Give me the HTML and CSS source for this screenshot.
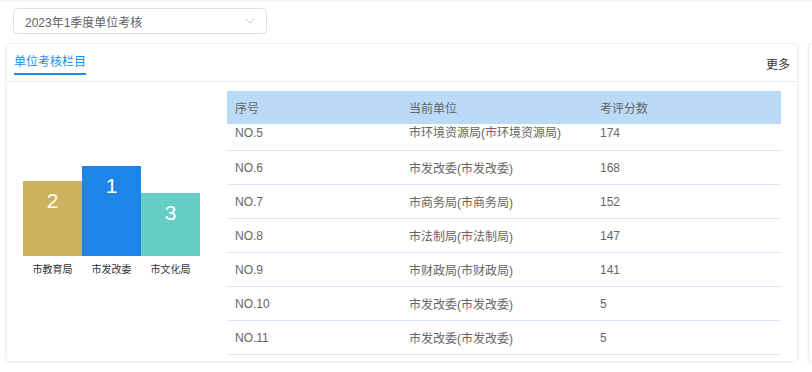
FILE: index.html
```html
<!DOCTYPE html>
<html lang="zh-CN">
  <head>
    <meta charset="UTF-8" />
    <meta name="viewport" content="width=device-width, initial-scale=1.0" />
    <title>单位考核</title>
    <link rel="stylesheet" href="styles.css">
  </head>
  <body>
    <div class="page">
      <div class="toolbar">
        <div class="select">
          <span class="select-text">2023年1季度单位考核</span>
          <svg class="select-arrow" width="10" height="6" viewBox="0 0 10 6">
            <path d="M1 1 L5 5 L9 1" fill="none" stroke="#c0c4cc" stroke-width="1" />
          </svg>
        </div>
      </div>

      <div class="cards">
        <div class="card">
          <div class="card-header">
            <span class="tab active">单位考核栏目</span>
            <span class="more">更多</span>
          </div>
          <div class="card-body">
            <div class="chart">
              <div class="bars">
                <div class="bar-col">
                  <div class="bar gold" style="height: 75px">2</div>
                  <div class="bar-label">市教育局</div>
                </div>
                <div class="bar-col">
                  <div class="bar blue" style="height: 90px">1</div>
                  <div class="bar-label">市发改委</div>
                </div>
                <div class="bar-col">
                  <div class="bar teal" style="height: 63px">3</div>
                  <div class="bar-label">市文化局</div>
                </div>
              </div>
            </div>

            <div class="table-wrap">
              <table class="rank-table">
                <thead>
                  <tr>
                    <th class="col-no">序号</th>
                    <th class="col-unit">当前单位</th>
                    <th>考评分数</th>
                  </tr>
                </thead>
                <tbody>
                  <tr class="cut">
                    <td>NO.5</td>
                    <td>市环境资源局(市环境资源局)</td>
                    <td>174</td>
                  </tr>
                  <tr>
                    <td>NO.6</td>
                    <td>市发改委(市发改委)</td>
                    <td>168</td>
                  </tr>
                  <tr>
                    <td>NO.7</td>
                    <td>市商务局(市商务局)</td>
                    <td>152</td>
                  </tr>
                  <tr>
                    <td>NO.8</td>
                    <td>市法制局(市法制局)</td>
                    <td>147</td>
                  </tr>
                  <tr>
                    <td>NO.9</td>
                    <td>市财政局(市财政局)</td>
                    <td>141</td>
                  </tr>
                  <tr>
                    <td>NO.10</td>
                    <td>市发改委(市发改委)</td>
                    <td>5</td>
                  </tr>
                  <tr>
                    <td>NO.11</td>
                    <td>市发改委(市发改委)</td>
                    <td>5</td>
                  </tr>
                </tbody>
              </table>
            </div>
          </div>
        </div>
        <div class="card side"></div>
      </div>
    </div>
  </body>
</html>
```

FILE: styles.css
```css
*,
*::before,
*::after {
  margin: 0;
  padding: 0;
  box-sizing: border-box;
}
html,
body {
  width: 100%;
  height: 100%;
  font-family: "Liberation Sans", "Noto Sans CJK SC", sans-serif;
  background-color: #fff;
  overflow: hidden;
}

.page {
  border-top: 2px solid #f2f5f9;
}

.toolbar {
  padding: 6px 13px 0;
  height: 41px;
}

.select {
  width: 254px;
  height: 26px;
  border: 1px solid #dcdfe6;
  border-radius: 4px;
  display: flex;
  align-items: center;
  justify-content: space-between;
  padding: 0 11px 0 11px;
}

.select-text {
  font-size: 12px;
  color: #606266;
}

.cards {
  display: flex;
  gap: 10px;
  padding: 0 0 4px 6px;
  overflow: hidden;
}

.card {
  width: 792px;
  height: 319px;
  flex-shrink: 0;
  background: #fff;
  border: 1px solid #edf1f6;
  border-radius: 4px;
  box-shadow: 0 0 4px rgba(30, 80, 140, 0.08);
}

.card.side {
  flex-shrink: 1;
  flex-grow: 1;
  width: auto;
  min-width: 0;
  border-right: none;
  border-radius: 4px 0 0 4px;
}

.card-header {
  height: 38px;
  display: flex;
  align-items: center;
  justify-content: space-between;
  padding: 0 7px;
  border-bottom: 1px solid #e8eef5;
}

.tab {
  font-size: 12px;
  line-height: 16px;
  color: #1a8cf0;
  padding-top: 2px;
  border-bottom: 2px solid #1a8cf0;
  padding-bottom: 3px;
  margin-top: 2px;
}

.more {
  font-size: 12px;
  color: #333;
  margin-top: 1px;
}

.card-body {
  display: flex;
}

.chart {
  width: 220px;
  padding: 84px 0 0 16px;
}

.bars {
  display: flex;
  align-items: flex-end;
}

.bar-col {
  width: 59px;
  display: flex;
  flex-direction: column;
  align-items: center;
}

.bar {
  width: 100%;
  color: #fff;
  font-size: 21px;
  line-height: 22px;
  padding-top: 9px;
  text-align: center;
}

.bar.gold {
  background: #ceb15c;
}

.bar.blue {
  background: #1f84e8;
}

.bar.teal {
  background: #66cfc5;
}

.bar-label {
  font-size: 10px;
  color: #333;
  margin-top: 7px;
  line-height: 14px;
}

.table-wrap {
  width: 554px;
  margin-top: 9px;
}

.rank-table {
  width: 100%;
  border-collapse: collapse;
  font-size: 12px;
  color: #666;
}

.rank-table th {
  background: #badaf8;
  height: 33px;
  text-align: left;
  font-weight: normal;
  padding: 0 8px;
  color: #666;
}

.rank-table .col-no {
  width: 174px;
}

.rank-table .col-unit {
  width: 191px;
}

.rank-table td {
  height: 34px;
  padding: 0 8px;
  border-bottom: 1px solid #d5e5f7;
}

.rank-table tr.cut td {
  height: 26px;
  padding-bottom: 8px;
  line-height: 18px;
}
```
